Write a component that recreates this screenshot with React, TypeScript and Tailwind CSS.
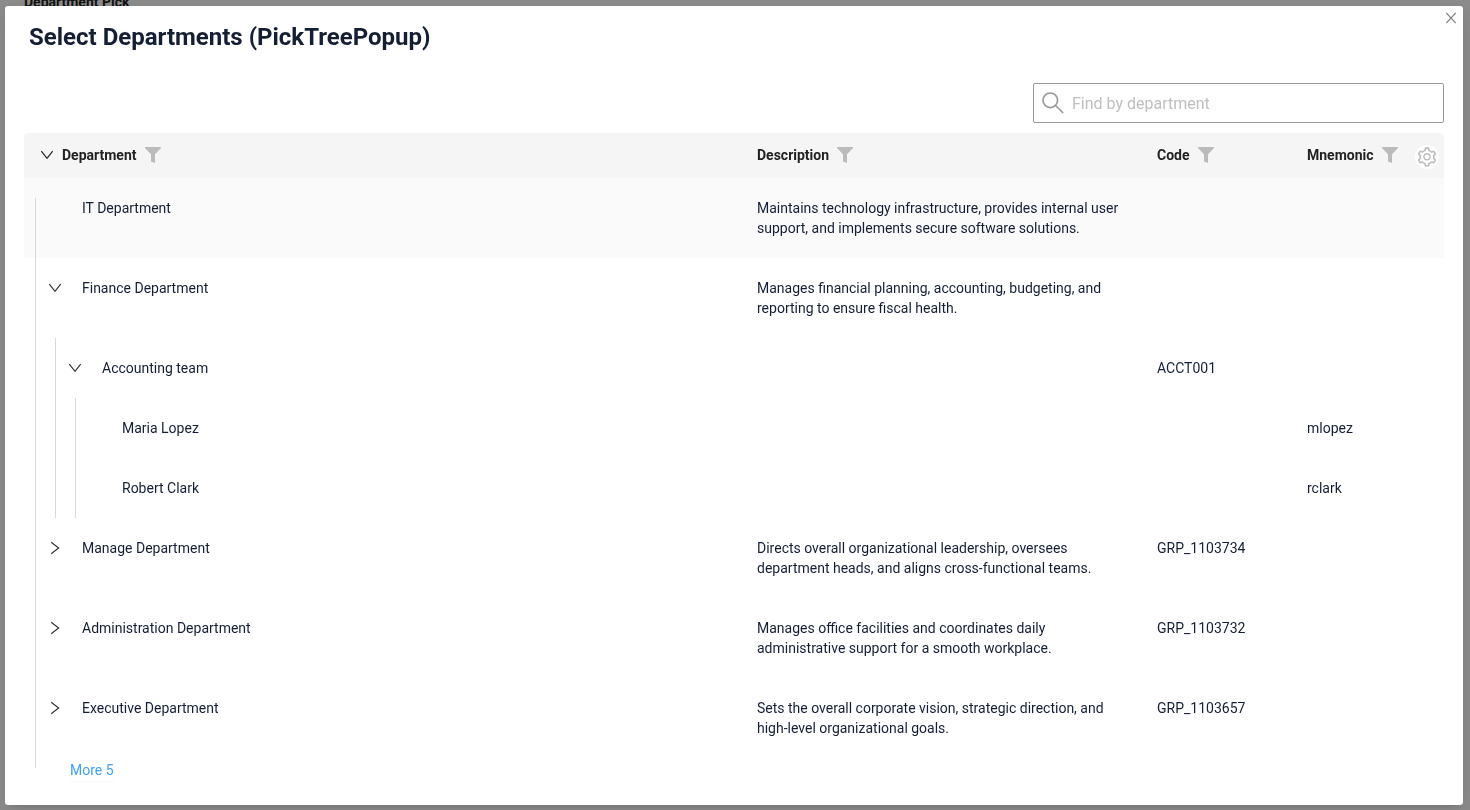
import { AiOutlineSetting } from "react-icons/ai";

type Row = {
  name: string;
  level: number;
  state?: "open" | "closed";
  description?: string;
  code?: string;
  mnemonic?: string;
};

const rows: Row[] = [
  {
    name: "IT Department",
    level: 1,
    description:
      "Maintains technology infrastructure, provides internal user support, and implements secure software solutions.",
  },
  {
    name: "Finance Department",
    level: 1,
    state: "open",
    description:
      "Manages financial planning, accounting, budgeting, and reporting to ensure fiscal health.",
  },
  { name: "Accounting team", level: 2, state: "open", code: "ACCT001" },
  { name: "Maria Lopez", level: 3, mnemonic: "mlopez" },
  { name: "Robert Clark", level: 3, mnemonic: "rclark" },
  {
    name: "Manage Department",
    level: 1,
    state: "closed",
    description:
      "Directs overall organizational leadership, oversees department heads, and aligns cross-functional teams.",
    code: "GRP_1103734",
  },
  {
    name: "Administration Department",
    level: 1,
    state: "closed",
    description:
      "Manages office facilities and coordinates daily administrative support for a smooth workplace.",
    code: "GRP_1103732",
  },
  {
    name: "Executive Department",
    level: 1,
    state: "closed",
    description:
      "Sets the overall corporate vision, strategic direction, and high-level organizational goals.",
    code: "GRP_1103657",
  },
];

function Chevron({ open }: { open: boolean }) {
  return (
    <svg width="14" height="14" viewBox="0 0 14 14" fill="none" stroke="currentColor" strokeWidth="1.2">
      <path d={open ? "M1.3 3.2L7 10.4l5.7-7.2" : "M3.2 1.3L10.6 7l-7.4 5.7"} />
    </svg>
  );
}

function FilterButton({ label }: { label: string }) {
  return (
    <button type="button" aria-label={`Filter by ${label}`} className="text-[#bbbbbb]">
      <svg width="16" height="16" viewBox="0 0 16 16" fill="currentColor">
        <path d="M0 0h16v1L10 7.2V16L6 14.5V7.2L0 1z" />
      </svg>
    </button>
  );
}

function HeaderLabel({ label }: { label: string }) {
  return (
    <div className="flex items-center gap-2">
      <span>{label}</span>
      <FilterButton label={label} />
    </div>
  );
}

function TreeCell({ row, first }: { row: Row; first: boolean }) {
  const guides = Array.from({ length: row.level }, (_, i) => i);

  return (
    <div className="flex h-full pl-px">
      {guides.map((guide) => (
        <div key={guide} className={first ? "w-5 pt-5 pl-2.5" : "w-5 pl-2.5"}>
          <div className="h-full w-px bg-[#d9d9d9]" />
        </div>
      ))}
      <div className="mr-[17px] flex w-5 justify-center pt-5">
        {row.state && (
          <button
            type="button"
            aria-label={`Toggle ${row.name}`}
            aria-expanded={row.state === "open"}
            className="flex h-5 items-center text-[#333333]"
          >
            <Chevron open={row.state === "open"} />
          </button>
        )}
      </div>
      <span className="py-5">{row.name}</span>
    </div>
  );
}

export default function App() {
  return (
    <div className="min-h-screen bg-white font-['Roboto',sans-serif] text-sm leading-5 text-[#141f35]">
      {/* PAGE BEHIND */}
      <p className="-mt-2 pl-6 font-bold text-[#222222]">Department Pick</p>

      {/* OVERLAY */}
      <div className="fixed inset-0 flex bg-black/45 pt-1.5 pr-[7px] pb-[5px] pl-[5px]">
        <div
          role="dialog"
          aria-labelledby="popup-title"
          className="relative min-w-0 flex-1 overflow-hidden rounded-[3px] bg-white px-[19px] pt-[15px] shadow-[0_3px_6px_-4px_rgba(0,0,0,0.12),0_6px_16px_0_rgba(0,0,0,0.08),0_9px_28px_8px_rgba(0,0,0,0.05)]"
        >
          <button type="button" aria-label="Close" className="absolute top-1 right-1 p-px text-[#777777]">
            <svg width="14" height="14" viewBox="0 0 14 14" fill="none" stroke="currentColor" strokeWidth="1.1">
              <path d="M2.3 1.8l9.4 10.4M11.7 1.8L2.3 12.2" />
            </svg>
          </button>

          <h1 id="popup-title" className="pl-[5px] text-2xl leading-8 font-bold">
            Select Departments (PickTreePopup)
          </h1>

          {/* SEARCH */}
          <label className="mt-[30px] ml-auto flex h-10 w-[411px] items-center gap-2 rounded-[2px] border border-[#999999] px-2">
            <svg width="22" height="22" viewBox="0 0 22 22" fill="none" stroke="#999999" strokeWidth="1.7">
              <circle cx="8.3" cy="8.3" r="7.3" />
              <path d="M13.5 13.5l7.7 7.5" />
            </svg>
            <input
              type="text"
              aria-label="Find by department"
              placeholder="Find by department"
              className="min-w-0 flex-1 pt-0.5 text-base outline-none placeholder:text-[#bfbfbf]"
            />
          </label>

          {/* TREE TABLE */}
          <table className="mt-2.5 w-full table-fixed text-left">
            <colgroup>
              <col />
              <col className="w-[400px]" />
              <col className="w-[150px]" />
              <col className="w-[145px]" />
            </colgroup>
            <thead className="text-[#222222]">
              <tr className="h-[45px]">
                <th className="rounded-tl-[4px] bg-[#f5f5f5] pb-0.5 pl-4">
                  <div className="flex items-center gap-2">
                    <button type="button" aria-label="Toggle all">
                      <Chevron open />
                    </button>
                    <HeaderLabel label="Department" />
                  </div>
                </th>
                <th className="bg-[#f5f5f5] px-2 pb-0.5">
                  <HeaderLabel label="Description" />
                </th>
                <th className="bg-[#f5f5f5] px-2 pb-0.5">
                  <HeaderLabel label="Code" />
                </th>
                <th className="rounded-tr-[4px] bg-[#f5f5f5] pr-[5px] pb-0.5 pl-2">
                  <div className="flex items-center justify-between">
                    <HeaderLabel label="Mnemonic" />
                    <button
                      type="button"
                      aria-label="Table settings"
                      className="mt-1 flex size-6 items-center justify-center rounded-full bg-white text-[#bbbbbb]"
                    >
                      <AiOutlineSetting className="size-[22px]" />
                    </button>
                  </div>
                </th>
              </tr>
            </thead>
            <tbody>
              {rows.map((row, index) => (
                <tr key={row.name} className={index === 0 ? "bg-[#fafafa]" : ""}>
                  <td className="h-px p-0">
                    <TreeCell row={row} first={index === 0} />
                  </td>
                  <td className="py-5 pr-6 pl-2 align-top">{row.description}</td>
                  <td className="px-2 py-5 align-top">{row.code}</td>
                  <td className="px-2 py-5 align-top">{row.mnemonic}</td>
                </tr>
              ))}
              <tr>
                <td colSpan={4} className="p-0">
                  <div className="flex pl-[11px]">
                    <div className="h-2.5 w-px bg-[#d9d9d9]" />
                    <button
                      type="button"
                      className="mt-px ml-[34px] h-[22px] text-[#40a0f8] shadow-[0_2px_0_rgba(0,0,0,0.015)]"
                    >
                      More 5
                    </button>
                  </div>
                </td>
              </tr>
            </tbody>
          </table>
        </div>
      </div>
    </div>
  );
}
